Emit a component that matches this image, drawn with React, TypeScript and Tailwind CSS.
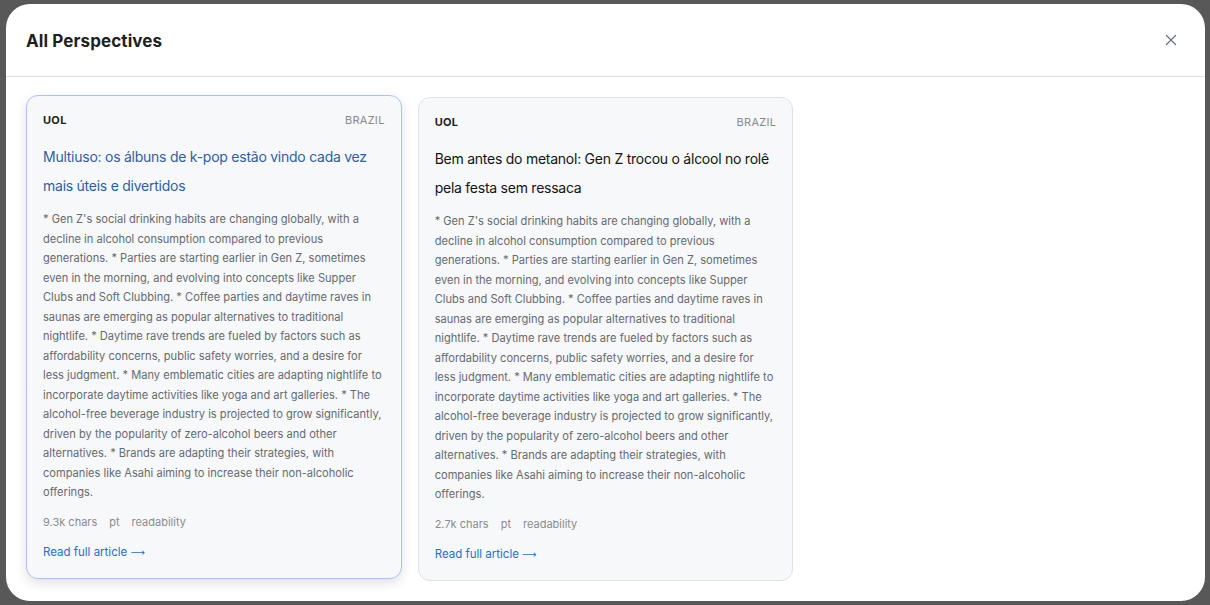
import { X } from 'lucide-react'

const SUMMARY =
  "* Gen Z's social drinking habits are changing globally, with a decline in alcohol consumption compared to previous generations. * Parties are starting earlier in Gen Z, sometimes even in the morning, and evolving into concepts like Supper Clubs and Soft Clubbing. * Coffee parties and daytime raves in saunas are emerging as popular alternatives to traditional nightlife. * Daytime rave trends are fueled by factors such as affordability concerns, public safety worries, and a desire for less judgment. * Many emblematic cities are adapting nightlife to incorporate daytime activities like yoga and art galleries. * The alcohol-free beverage industry is projected to grow significantly, driven by the popularity of zero-alcohol beers and other alternatives. * Brands are adapting their strategies, with companies like Asahi aiming to increase their non-alcoholic offerings."

const ARTICLES = [
  {
    id: 'a1',
    source: 'UOL',
    country: 'Brazil',
    title: 'Multiuso: os álbuns de k-pop estão vindo cada vez mais úteis e divertidos',
    chars: '9.3k chars',
    active: true,
  },
  {
    id: 'a2',
    source: 'UOL',
    country: 'Brazil',
    title: 'Bem antes do metanol: Gen Z trocou o álcool no rolê pela festa sem ressaca',
    chars: '2.7k chars',
    active: false,
  },
]

export default function App() {
  return (
    <div
      className="h-screen w-full bg-[#585858] pt-1 pb-1 pl-[6px] pr-[5px] flex"
      style={{ fontFamily: 'Inter, "Noto Sans", sans-serif' }}
    >
      <div className="flex-1 bg-white rounded-[24px] flex flex-col overflow-hidden">
        {/* Header */}
        <div className="h-[73px] shrink-0 flex items-center justify-between pl-5 pr-[25px] pt-1 border-b border-[#dcdcdc]">
          <h2 className="text-[17px] font-bold text-[#1f1f1f] tracking-[0.1px]">All Perspectives</h2>
          <button className="text-[#6b7280] -mt-1">
            <X className="w-[18px] h-[18px]" strokeWidth={1.75} />
          </button>
        </div>

        {/* Cards */}
        <div className="p-5 grid grid-cols-3 gap-4 items-start">
          {ARTICLES.map((a) => (
            <div
              key={a.id}
              className={
                a.active
                  ? 'rounded-xl border border-[#a9c4f3] bg-[#f7f8fa] px-4 pt-4 pb-[17px] -translate-y-0.5 shadow-[0_4px_12px_rgba(0,0,0,0.12)]'
                  : 'rounded-xl border border-[#dfe1e5] bg-[#f7f8fa] px-4 pt-4 pb-[17px]'
              }
            >
              <div className="flex items-center justify-between h-4">
                <span className="text-[11px] font-bold text-[#1f1f1f] tracking-[0.3px]">{a.source}</span>
                <span className="text-[11px] uppercase text-[#8a8a8a] tracking-[0.3px]">{a.country}</span>
              </div>
              <h3
                className={
                  a.active
                    ? 'mt-[14px] text-[14px] leading-[29px] tracking-[-0.25px] text-[#2f5ea8]'
                    : 'mt-[14px] text-[14px] leading-[29px] tracking-[-0.25px] text-[#141414]'
                }
              >
                {a.title}
              </h3>
              <p className="mt-[10px] text-[11.1px] leading-[19.5px] text-[#666a70]">{SUMMARY}</p>
              <div className="mt-[11px] flex items-center gap-3 text-[11px] leading-4 text-[#8c8c8c]">
                <span>{a.chars}</span>
                <span>pt</span>
                <span>readability</span>
              </div>
              <a href="#" className="mt-[14px] block text-[11.5px] leading-4 text-[#1f6fd6]">
                Read full article{' '}
                <span style={{ fontFamily: '"DejaVu Sans", sans-serif' }} className="text-[10px]">
                  ⟶
                </span>
              </a>
            </div>
          ))}
        </div>
      </div>
    </div>
  )
}
